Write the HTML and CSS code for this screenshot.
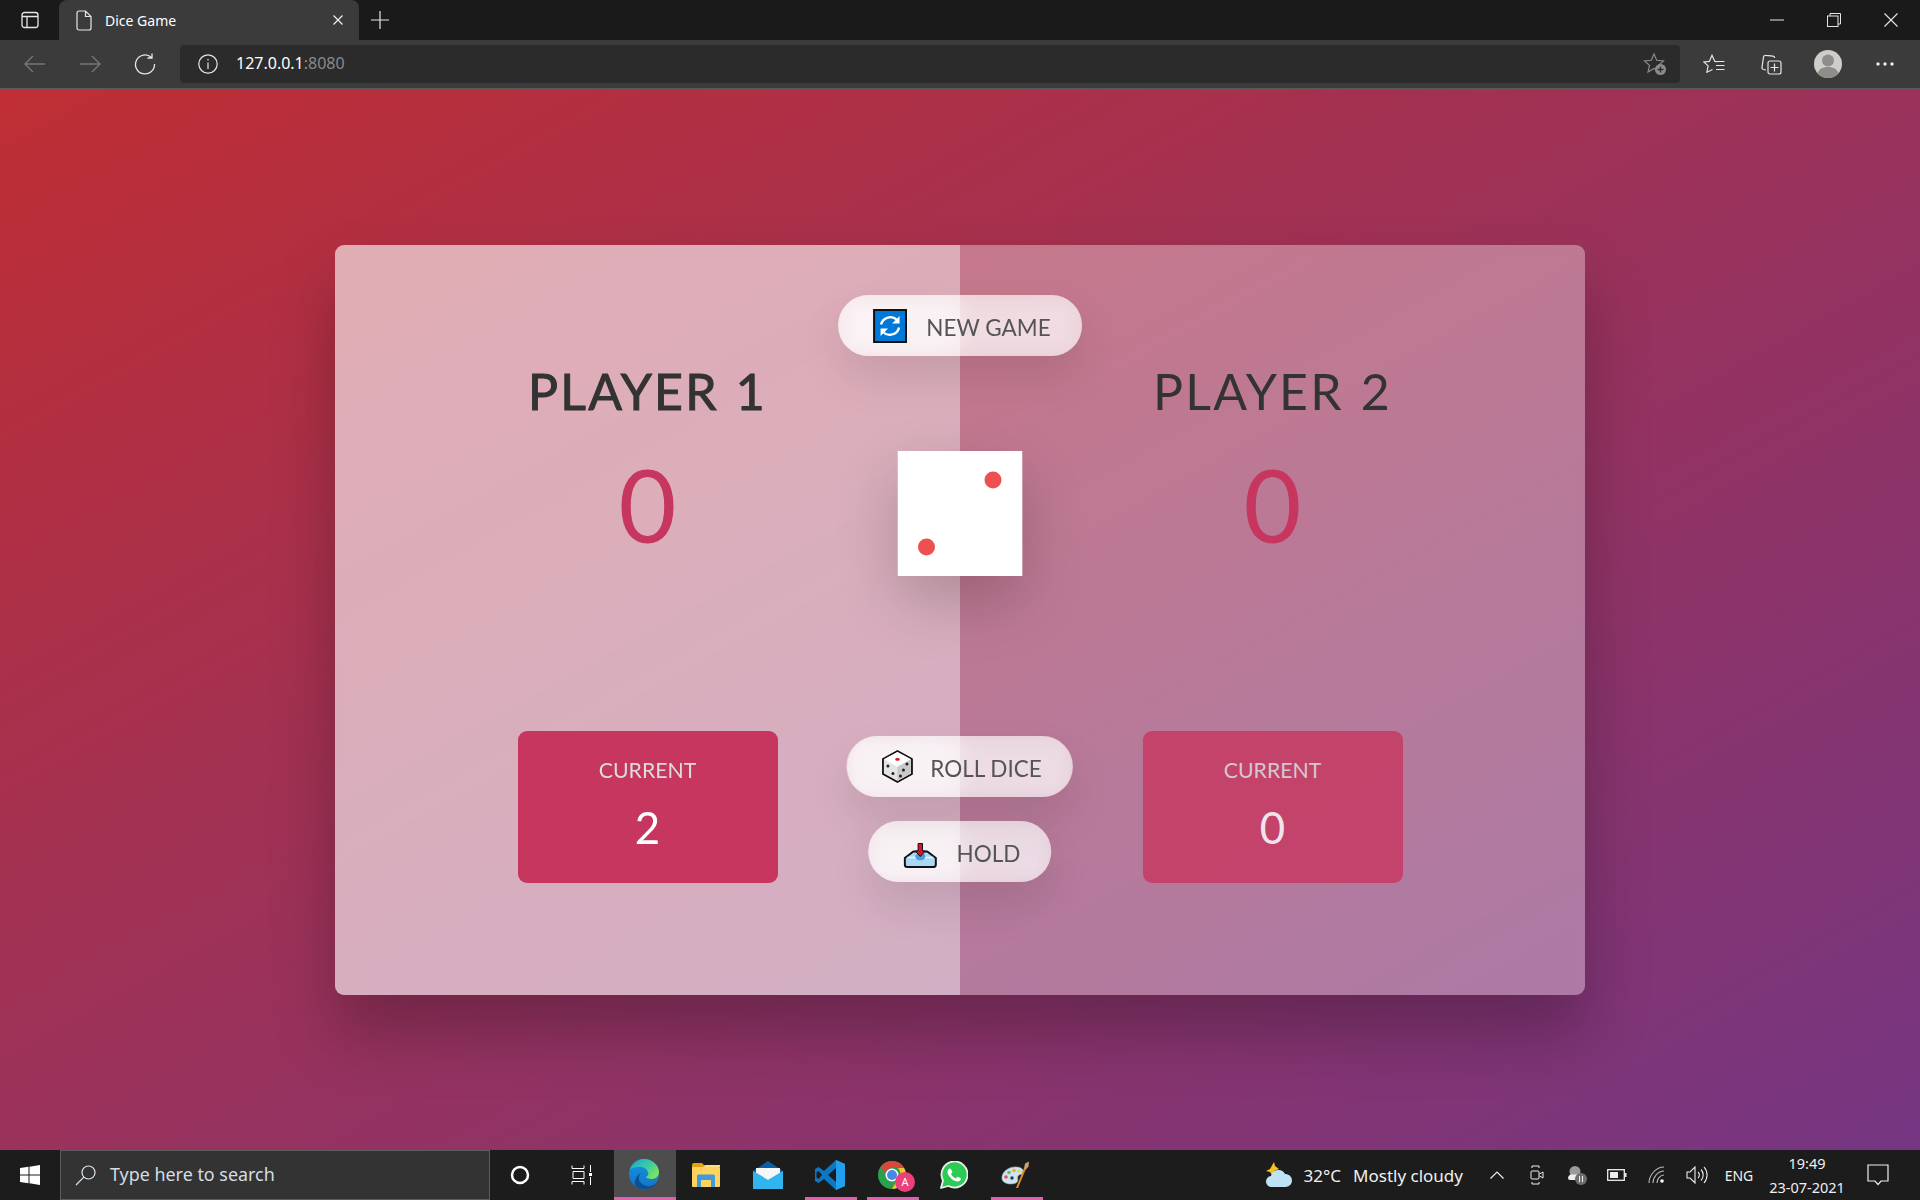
FILE: index.html
```html
<!DOCTYPE html>
<html>
<head>
    <title>Dice Game</title>
    <link rel="stylesheet" href="styles.css">
</head>
<body>
    <header class="browser">
        <div class="tabstrip">
            <div class="strip-btn">
                <svg width="18" height="18" viewBox="0 0 18 18" fill="none" stroke="#e6e6e6" stroke-width="1.3"><rect x="1" y="1.5" width="16" height="15" rx="2.5"/><path d="M1 5.5h16M6 5.5v11"/></svg>
            </div>
            <div class="tab">
                <svg width="16" height="21" viewBox="0 0 16 21" fill="none" stroke="#e6e6e6" stroke-width="1.2"><path d="M3 1h6.5L15 6.5V18a2 2 0 0 1-2 2H3a2 2 0 0 1-2-2V3a2 2 0 0 1 2-2zM9.500 1v5.500H15"/></svg>
                <span class="tab-title">Dice Game</span>
                <svg class="tab-close" width="12" height="12" viewBox="0 0 12 12" stroke="#f0f0f0" stroke-width="1.2"><path d="M1.500 1.500l9 9M10.500 1.500l-9 9"/></svg>
            </div>
            <div class="new-tab">
                <svg width="18" height="18" viewBox="0 0 18 18" stroke="#e6e6e6" stroke-width="1.2"><path d="M9 0v18M0 9h18"/></svg>
            </div>
            <div class="window-btns">
                <div class="window-btn"><svg width="14" height="2" viewBox="0 0 14 2" stroke="#e6e6e6"><path d="M0 1h14"/></svg></div>
                <div class="window-btn"><svg width="14" height="14" viewBox="0 0 14 14" fill="none" stroke="#e6e6e6"><rect x=".5" y="3" width="10.500" height="10.500"/><path d="M3 3V.5h10.500V11H11"/></svg></div>
                <div class="window-btn"><svg width="14" height="14" viewBox="0 0 14 14" stroke="#e6e6e6" stroke-width="1.100"><path d="M.5.5l13 13M13.500.5l-13 13"/></svg></div>
            </div>
        </div>
        <div class="toolbar">
            <div class="nav-btn">
                <svg width="22" height="18" viewBox="0 0 22 18" fill="none" stroke="#777" stroke-width="1.300"><path d="M21 9H1M9 1L1 9l8 8"/></svg>
            </div>
            <div class="nav-btn">
                <svg width="22" height="18" viewBox="0 0 22 18" fill="none" stroke="#777" stroke-width="1.300"><path d="M1 9h20M13 1l8 8-8 8"/></svg>
            </div>
            <div class="nav-btn">
                <svg width="22" height="22" viewBox="0 0 22 22" fill="none" stroke="#e6e6e6" stroke-width="1.300"><path d="M17.500 4.500A9.500 9.500 0 1 0 20.500 11M18 .5v4.500h-4.500"/></svg>
            </div>
            <div class="address">
                <svg class="info-icon" width="20" height="20" viewBox="0 0 20 20" fill="none" stroke="#e6e6e6" stroke-width="1.200"><circle cx="10" cy="10" r="9.200"/><path d="M10 8.500v6.500M10 5v1.600"/></svg>
                <span class="url">127.0.0.1<span class="url-port">:8080</span></span>
                <svg class="fav-add" width="24" height="24" viewBox="0 0 24 24" fill="none" stroke="#8c8c8c" stroke-width="1.200"><path d="M11 2l2.700 6.300 6.800.6-5.200 4.500 1.600 6.600L11 16.500 5 20l1.600-6.600L1.500 8.900l6.800-.6z"/><circle cx="17.500" cy="17.500" r="5.500" fill="#8c8c8c" stroke="none"/><path d="M17.500 14.500v6M14.500 17.500h6" stroke="#2b2b2b" stroke-width="1.400"/></svg>
            </div>
            <div class="tool-btn">
                <svg width="22" height="20" viewBox="0 0 22 20" fill="none" stroke="#e6e6e6" stroke-width="1.200"><path d="M14.500 7.700L11.800 7.400 9 1.300 6.300 7.400.9 8l4.200 3.900-1.200 6.300L9.500 15.500M14 7.500h7.500M13 11.500h8.500M13 15.500h8.500"/></svg>
            </div>
            <div class="tool-btn">
                <svg width="22" height="22" viewBox="0 0 22 22" fill="none" stroke="#e6e6e6" stroke-width="1.200"><path d="M6 17l-2.500-.5a2 2 0 0 1-1.500-2.300L3.500 4A2 2 0 0 1 5.800 2.300L13 3.200a2 2 0 0 1 1.700 1.800"/><rect x="8" y="8" width="13" height="13" rx="2"/><path d="M14.500 10.500v8M10.500 14.500h8"/></svg>
            </div>
            <div class="tool-btn">
                <svg width="28" height="28" viewBox="0 0 28 28"><circle cx="14" cy="14" r="14" fill="#cfcdca"/><circle cx="14" cy="10.500" r="6" fill="#8f8d8a"/><path d="M3.500 23c2-4.500 6-6 10.500-6s8.500 1.500 10.500 6A14 14 0 0 1 14 28 14 14 0 0 1 3.500 23z" fill="#8f8d8a"/></svg>
            </div>
            <div class="tool-btn">
                <svg width="18" height="4" viewBox="0 0 18 4" fill="#eee"><circle cx="2" cy="2" r="1.700"/><circle cx="9" cy="2" r="1.700"/><circle cx="16" cy="2" r="1.700"/></svg>
            </div>
        </div>
    </header>

    <div class="page">
        <main class="game">
            <section class="player player-active">
                <h2 class="name">Player 1</h2>
                <p class="score">0</p>
                <div class="current">
                    <p class="current-label">Current</p>
                    <p class="current-score">2</p>
                </div>
            </section>
            <section class="player">
                <h2 class="name">Player 2</h2>
                <p class="score">0</p>
                <div class="current">
                    <p class="current-label">Current</p>
                    <p class="current-score">0</p>
                </div>
            </section>

            <svg class="dice" width="125" height="125" viewBox="0 0 125 125"><rect width="125" height="125" fill="#fff"/><circle cx="95.500" cy="29" r="8.500" fill="#ee5050"/><circle cx="29" cy="96" r="8.500" fill="#ee5050"/></svg>

            <button class="btn btn-new">
                <svg class="btn-icon" width="34" height="34" viewBox="0 0 34 34"><rect x="1" y="1" width="32" height="32" fill="#0078d7" stroke="#111" stroke-width="2"/><path d="M8 15.500A9.500 9.500 0 0 1 24 11" fill="none" stroke="#fff" stroke-width="2.400"/><path d="M26 18.500A9.500 9.500 0 0 1 10 23" fill="none" stroke="#fff" stroke-width="2.400"/><path d="M26.500 7v7.500H19zM7.500 27v-7.500H15z" fill="#fff"/></svg>
                <span class="btn-text">New game</span>
            </button>
            <button class="btn btn-roll">
                <svg class="btn-icon icon-roll" width="31" height="33" viewBox="0 0 31 33"><path d="M15.500 1L30 9v15l-14.500 8L1 24V9z" fill="#e4e4e4" stroke="#111" stroke-width="1.800" stroke-linejoin="round"/><path d="M15.500 2L29 9.200l-13.500 7.500L2 9.200z" fill="#fff"/><path d="M15.500 16.700L29 9.200V23.500l-13.500 7.500z" fill="#c9c9c9"/><ellipse cx="15.500" cy="9.200" rx="2.300" ry="1.500" fill="#d0202a"/><circle cx="6" cy="16" r="1.500" fill="#222"/><circle cx="11" cy="23.500" r="1.500" fill="#222"/><circle cx="25" cy="14" r="1.500" fill="#222"/><circle cx="21.500" cy="20" r="1.500" fill="#222"/><circle cx="18.500" cy="26" r="1.500" fill="#222"/></svg>
                <span class="btn-text">Roll dice</span>
            </button>
            <button class="btn btn-hold">
                <svg class="btn-icon icon-hold" width="34" height="25" viewBox="0 0 34 25"><path d="M10 8.500L1.500 15v6.500a2.500 2.500 0 0 0 2.500 2.500h26a2.500 2.500 0 0 0 2.500-2.500V15L24 8.500z" fill="#a9d8f5" stroke="#111" stroke-width="2" stroke-linejoin="round"/><path d="M4 14.500h9a4.500 4.500 0 0 0 8 0h9" fill="none" stroke="#e8f5fd" stroke-width="1.500"/><ellipse cx="17" cy="13.500" rx="5" ry="4" fill="#4a9de0"/><path d="M14.800 .5h4.400v7.500h2.800L17 13.500 12 8h2.800z" fill="#e0102a" stroke="#111" stroke-width="1" stroke-linejoin="round"/></svg>
                <span class="btn-text">Hold</span>
            </button>
        </main>
    </div>

    <footer class="taskbar">
        <div class="start">
            <svg width="20" height="20" viewBox="0 0 20 20" fill="#fff"><path d="M0 3l8.500-1.200v7.700H0zM9.500 1.700L20 0v9.500H9.500zM0 10.500h8.500v7.700L0 17zM9.500 10.500H20V20L9.500 18.300z"/></svg>
        </div>
        <div class="search">
            <svg width="22" height="22" viewBox="0 0 22 22" fill="none" stroke="#dfe5ea" stroke-width="1.200"><circle cx="13.500" cy="8.500" r="6.500"/><path d="M8.800 13.200L1 21"/></svg>
            <span class="search-text">Type here to search</span>
        </div>
        <div class="task-tile">
            <svg width="20" height="20" viewBox="0 0 20 20" fill="none" stroke="#fff" stroke-width="2.500"><circle cx="10" cy="10" r="8"/></svg>
        </div>
        <div class="task-tile">
            <svg width="22" height="20" viewBox="0 0 22 20" fill="none" stroke="#fff" stroke-width="1"><path d="M1 3.500V.5M13 3.500V.5M1 3.500h12M1 16.500v3M13 16.500v3M1 16.500h12M2 6.500h11v7H2zM19.500 0v7M19.500 12v8"/><rect x="18" y="8" width="3" height="3" fill="#fff" stroke="none"/></svg>
        </div>
        <div class="task-tile tile-active">
            <svg width="32" height="32" viewBox="0 0 32 32">
                <defs>
                    <linearGradient id="edge-top" x1="0" y1="0" x2="1" y2=".7"><stop offset="0" stop-color="#1c9fd6"/><stop offset=".55" stop-color="#38cba6"/><stop offset="1" stop-color="#80e35a"/></linearGradient>
                    <linearGradient id="edge-low" x1="0" y1="0" x2="0" y2="1"><stop offset="0" stop-color="#1296e0"/><stop offset="1" stop-color="#1573c4"/></linearGradient>
                </defs>
                <circle cx="16" cy="16" r="15" fill="url(#edge-low)"/>
                <path d="M1.500 13C3 6 9 1 16 1c8 0 15 6 15 13 0 4-3 7-7 7-3 0-6-1-6-2 2-1 3-3 2-5-1-3-4-5-8-5-5 0-10 1-10.500 4z" fill="url(#edge-top)"/>
                <path d="M13 15c-3 3-3 8 1 11 4 3 10 3 15-1-3 4-8 6-13 6-4 0-7-1-9-4-1-5 2-10 6-12z" fill="#0b4f96"/>
            </svg>
        </div>
        <div class="task-tile">
            <svg width="30" height="26" viewBox="0 0 30 26"><path d="M1 3a2 2 0 0 1 2-2h8l2 2h3v4H1z" fill="#e0a410"/><rect x="1" y="5" width="28" height="20" rx="1" fill="#ffd35c"/><path d="M1 5h11l3-2h14v2z" fill="#ffdf80"/><path d="M6 25V14a1.500 1.500 0 0 1 1.500-1.500h15A1.500 1.500 0 0 1 24 14v11h-4v-7h-10v7z" fill="#3d9be0"/></svg>
        </div>
        <div class="task-tile">
            <svg width="30" height="28" viewBox="0 0 30 28"><path d="M15 0l15 10v17a1 1 0 0 1-1 1H1a1 1 0 0 1-1-1V10z" fill="#0a5ea8"/><path d="M3 7h24v8l-12 7-12-7z" fill="#f4f6f8"/><path d="M0 10l15 9 15-9v17a1 1 0 0 1-1 1H1a1 1 0 0 1-1-1z" fill="#2aa6ec"/><path d="M0 28V10l15 9 15-9v18z" fill="#38c0f2" opacity=".6"/></svg>
        </div>
        <div class="task-tile tile-open">
            <svg width="30" height="30" viewBox="0 0 30 30"><path d="M21 0l9 4v22l-9 4-12-11-5.500 4L0 21v-12l3.500-2L9 11z" fill="#0a78c2"/><path d="M21 0l9 4v22l-9 4z" fill="#22a0ee"/><path d="M21 8l-8 7 8 7z" fill="#1c1c1c"/><path d="M3.500 11l-2 1.500v5l2 1.500 3.500-4z" fill="#1c1c1c"/></svg>
        </div>
        <div class="task-tile tile-open chrome-tile">
            <svg width="28" height="28" viewBox="0 0 28 28"><circle cx="14" cy="14" r="14" fill="#2e9e4f"/><path d="M14 0a14 14 0 0 1 12.100 7H14a7 7 0 0 0-6.500 4.500L2.400 6.500A14 14 0 0 1 14 0z" fill="#d8483b"/><path d="M26.100 7A14 14 0 0 1 14 28l6-10.500a7 7 0 0 0 0-10.500z" fill="#f7c530"/><circle cx="14" cy="14" r="6.500" fill="#fff"/><circle cx="14" cy="14" r="5" fill="#4a86e8"/></svg>
            <span class="chrome-badge">A</span>
        </div>
        <div class="task-tile">
            <svg width="28" height="28" viewBox="0 0 28 28"><path d="M1 27l2-7.500A13 13 0 1 1 8.500 25z" fill="#2ccb55" stroke="#eee" stroke-width="1.800" stroke-linejoin="round"/><path d="M10 7.500c-1 0-2.500 1.500-2.500 3.500 0 3.500 5.500 9.500 10 9.500 2.200 0 3.500-1.500 3.500-2.700 0-.6-3-2-3.500-2-.6 0-1.200 1.500-1.800 1.500-1 0-4.500-3-4.500-4.300 0-.7 1.200-1.200 1.200-1.900 0-.5-1.400-3.600-2.400-3.600z" fill="#fff"/></svg>
        </div>
        <div class="task-tile tile-open">
            <svg width="30" height="30" viewBox="0 0 30 30"><path d="M1 19C0 12 8 6 16 7c5 .6 7 3 6 6-1 2-4 1-5 3-1 3 1 5-2 7-5 2-13 1-14-4z" fill="#cfe4f2" stroke="#8fb3c8" stroke-width=".6"/><circle cx="5" cy="17" r="1.800" fill="#e25555"/><circle cx="8" cy="12.500" r="1.800" fill="#6cc04a"/><circle cx="13" cy="10.500" r="1.800" fill="#f2a833"/><circle cx="18" cy="11" r="1.600" fill="#f2d033"/><circle cx="11" cy="18" r="1.700" fill="#24384a"/><path d="M15 28L23 8l2 .8L17 28z" fill="#e08a2a"/><path d="M23 8.500l1-5 4-2-.5 5-2.500 3z" fill="#c9a36a"/></svg>
        </div>

        <div class="weather">
            <svg width="28" height="26" viewBox="0 0 28 26"><path d="M9 0l1 4 4 3-5 2-2 4-2-3-4-1 4-2z" fill="#f6c21c"/><path d="M7 25a5.500 5.500 0 0 1-1-11 7.500 7.500 0 0 1 14-2 6.500 6.500 0 0 1 1 13z" fill="#bfe3f6"/></svg>
            <span class="temp">32°C</span>
            <span>Mostly cloudy</span>
        </div>
        <div class="tray">
            <div class="tray-slot"><svg width="14" height="8" viewBox="0 0 14 8" fill="none" stroke="#eee" stroke-width="1.200"><path d="M.5 7.500L7 1l6.500 6.500"/></svg></div>
            <div class="tray-slot"><svg width="14" height="20" viewBox="0 0 14 20" fill="none" stroke="#eee"><path d="M2 3V1h7v2M2 17v2h7v-2"/><rect x="1" y="6" width="8" height="8" rx="1"/><path d="M9.500 9l3.500-2v6l-3.500-2"/></svg></div>
            <div class="tray-slot"><svg width="20" height="20" viewBox="0 0 20 20"><circle cx="8" cy="6.500" r="5.500" fill="#9a9a9a"/><path d="M1 13a4 4 0 0 1 5-3.500h6V15H3a2 2 0 0 1-2-2z" fill="#eee"/><circle cx="14" cy="14" r="6" fill="#6e6e6e"/><path d="M12.500 11v6M15.500 11v6" stroke="#eee"/></svg></div>
            <div class="tray-slot"><svg width="20" height="12" viewBox="0 0 20 12"><rect x=".7" y=".7" width="16.600" height="10.600" fill="none" stroke="#eee" stroke-width="1.300"/><rect x="3" y="3" width="8" height="6" fill="#eee"/><rect x="18" y="4" width="1.500" height="4" fill="#eee"/></svg></div>
            <div class="tray-slot"><svg width="18" height="18" viewBox="0 0 18 18" fill="none" stroke="#bbb" stroke-width="1.100"><path d="M1 17C1 9 8 1 16 1M5 17c0-6 5-12 11-12M9 17c0-3.500 3-8 7-8"/><circle cx="14" cy="15" r="1.800" fill="#fff" stroke="none"/></svg></div>
            <div class="tray-slot"><svg width="22" height="20" viewBox="0 0 22 20" fill="none" stroke="#eee" stroke-width="1.100"><path d="M1 7h3l5-5v16l-5-5H1zM12 7a4 4 0 0 1 0 6M15 4.500a8 8 0 0 1 0 11M18 2a12 12 0 0 1 0 16"/></svg></div>
            <div class="tray-lang">ENG</div>
            <div class="tray-clock"><span>19:49</span><span>23-07-2021</span></div>
            <div class="tray-note"><svg width="22" height="22" viewBox="0 0 22 22" fill="none" stroke="#eee" stroke-width="1.200"><path d="M1 1h20v16h-7l-3 3.500L8 17H1z"/></svg></div>
        </div>
    </footer>
</body>
</html>
```
FILE: styles.css
```css
html { font-size: 12.5px; }
* { margin: 0; padding: 0; box-sizing: border-box; }
body {
    width: 100%;
    height: 1200px;
    display: flex;
    flex-direction: column;
    overflow: hidden;
    font-family: 'Lato', sans-serif;
    background: #1c1c1c;
}

/* browser frame */
.browser { height: 89px; background: #3b3b3b; border-bottom: 1px solid #5a5a5a; font-family: 'Noto Sans', sans-serif; }
.tabstrip { height: 40px; display: flex; align-items: stretch; background: #1a1a1a; }
.strip-btn { width: 59px; display: flex; align-items: center; justify-content: center; }
.tab {
    width: 300px;
    display: flex;
    align-items: center;
    padding-left: 17px;
    background: #3b3b3b;
    border-radius: 8px 8px 0 0;
    color: #fff;
    font-size: 14px;
}
.tab-title { margin-left: 13px; }
.tab-close { margin-left: auto; margin-right: 15px; }
.new-tab { width: 42px; display: flex; align-items: center; justify-content: center; }
.window-btns { display: flex; margin-left: auto; margin-right: 1px; }
.window-btn { width: 57px; display: flex; align-items: center; justify-content: center; }
.toolbar { height: 48px; display: flex; align-items: center; padding: 0 7px 0 7px; }
.nav-btn { width: 55px; display: flex; justify-content: center; }
.address {
    flex: 1;
    height: 38px;
    margin: 0 5px 0 8px;
    display: flex;
    align-items: center;
    padding: 0 13px 0 18px;
    background: #2b2b2b;
    border-radius: 4px;
}
.info-icon { margin-right: 18px; }
.url { color: #fff; font-size: 16px; margin-top: -2px; }
.url-port { color: #8a8a8a; }
.fav-add { margin-left: auto; }
.tool-btn { width: 57px; display: flex; justify-content: center; }

/* game */
.page {
    flex: 1;
    display: flex;
    align-items: center;
    justify-content: center;
    padding-top: 1px;
    background-image: linear-gradient(to top left, #753682 0%, #bf2e34 100%);
}
.game {
    position: relative;
    width: 100rem;
    height: 60rem;
    display: grid;
    grid-template-columns: 1fr 1fr;
    overflow: hidden;
    color: #333;
    line-height: 1.364;
    background-color: rgba(255, 255, 255, 0.35);
    backdrop-filter: blur(4px);
    box-shadow: 0 3rem 5rem rgba(0, 0, 0, 0.25);
    border-radius: 9px;
}
.player { padding: 9rem; display: flex; flex-direction: column; align-items: center; }
.player-active { background-color: rgba(255, 255, 255, 0.4); }
.name {
    font-size: 4rem;
    font-weight: 400;
    line-height: 66px;
    text-transform: uppercase;
    letter-spacing: 2.2px;
    word-spacing: 2px;
    white-space: nowrap;
    margin-bottom: 1.2rem;
}
.player-active .name { -webkit-text-stroke: 1px #333; }
.score { font-size: 8rem; font-weight: 400; line-height: 130px; color: #c7365f; margin-bottom: auto; }
.current {
    width: 65%;
    padding: 2rem;
    text-align: center;
    color: #fff;
    background-color: #c7365f;
    border-radius: 9px;
    opacity: 0.8;
}
.player-active .current { opacity: 1; }
.current-label { font-size: 1.7rem; text-transform: uppercase; color: #ddd; margin-bottom: 1rem; }
.current-score { font-size: 3.5rem; }

.dice {
    position: absolute;
    left: 50%;
    top: 16.5rem;
    transform: translateX(-50%);
    box-shadow: 0 2rem 5rem rgba(0, 0, 0, 0.2);
}
.btn {
    position: absolute;
    left: 50%;
    transform: translateX(-50%);
    display: flex;
    align-items: center;
    height: 61px;
    padding: 0 2.5rem;
    border: none;
    border-radius: 50rem;
    color: #555;
    font-family: inherit;
    font-size: 1.8rem;
    text-transform: uppercase;
    white-space: nowrap;
    background-color: rgba(255, 255, 255, 0.6);
    backdrop-filter: blur(10px);
    box-shadow: 0 1.75rem 3.5rem rgba(0, 0, 0, 0.1);
}
.btn-icon { margin: 0 19px 0 4px; }
.icon-roll { margin-right: 17px; }
.icon-hold { margin-top: 7px; }
.btn-text { margin-top: 3px; }
.btn-new { top: 4rem; }
.btn-roll { top: 39.3rem; }
.btn-hold { top: 46.1rem; }

/* taskbar */
.taskbar {
    height: 50px;
    display: flex;
    align-items: stretch;
    flex-shrink: 0;
    background: #1c1c1c;
    color: #f0f0f0;
    font-family: 'Noto Sans', sans-serif;
}
.start { width: 60px; display: flex; align-items: center; justify-content: center; }
.search {
    width: 430px;
    display: flex;
    align-items: center;
    padding-left: 14px;
    background: #333;
    border: 1px solid #5c5c5c;
}
.search-text { margin-left: 13px; margin-top: -2px; color: #d4dde4; font-size: 17.9px; }
.task-tile { position: relative; width: 62px; display: flex; align-items: center; justify-content: center; padding-right: 2px; }
.tile-active { background: #4d4d4d; border-bottom: 3px solid #e060b0; }
.tile-open::after {
    content: '';
    position: absolute;
    left: 5px;
    right: 5px;
    bottom: 0;
    height: 3px;
    background: #e060b0;
}
.chrome-badge {
    position: absolute;
    left: 33px;
    top: 22px;
    width: 20px;
    height: 20px;
    border-radius: 50%;
    background: #ec407a;
    color: #fff;
    font-size: 11px;
    line-height: 20px;
    text-align: center;
}
.weather { margin-left: auto; display: flex; align-items: center; font-size: 17px; color: #f0f0f0; }
.temp { margin: 0 12px 0 11px; }
.tray { display: flex; align-items: stretch; margin-left: 14px; padding-right: 17px; }
.tray-slot { width: 40px; display: flex; align-items: center; justify-content: center; }
.tray-lang { width: 44px; display: flex; align-items: center; justify-content: center; font-size: 14px; }
.tray-clock {
    width: 92px;
    display: flex;
    flex-direction: column;
    align-items: center;
    justify-content: center;
    font-size: 14.5px;
    line-height: 24px;
}
.tray-note { width: 50px; display: flex; align-items: center; justify-content: center; }
```
